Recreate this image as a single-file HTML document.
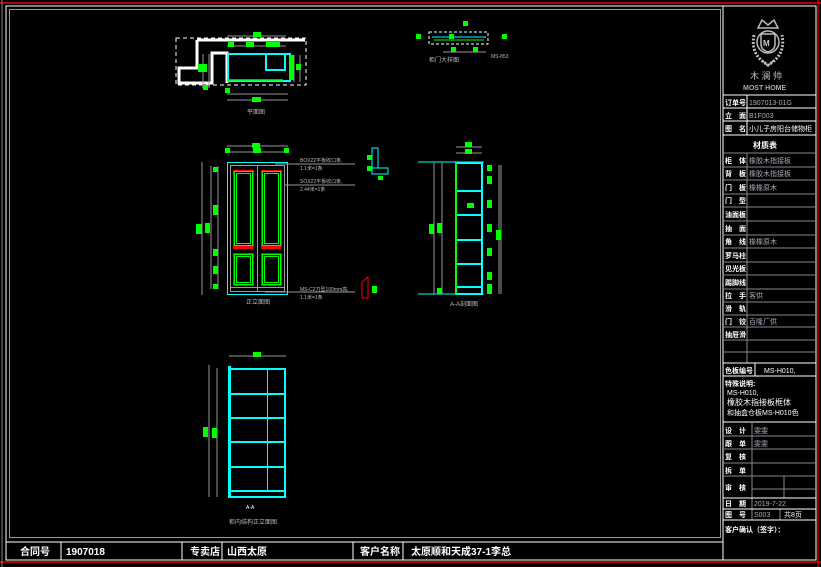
<!DOCTYPE html>
<html><head><meta charset="utf-8"><style>
html,body{margin:0;padding:0;background:#000;}
svg{display:block}
text{font-family:"Liberation Sans","Noto Sans CJK SC",sans-serif;}
</style></head><body>
<svg width="821" height="567" viewBox="0 0 821 567" xmlns="http://www.w3.org/2000/svg">
<rect width="821" height="567" fill="#000"/>
<line x1="0" y1="3" x2="821" y2="3" stroke="#e00" stroke-width="1.5"/>
<line x1="0" y1="562" x2="821" y2="562" stroke="#e00" stroke-width="1.5"/>
<line x1="818" y1="0" x2="818" y2="567" stroke="#e00" stroke-width="1.2"/>
<line x1="2" y1="0" x2="2" y2="567" stroke="#888" stroke-width="1"/>
<rect x="6" y="6" width="810" height="554" fill="none" stroke="#fff" stroke-width="1"/>
<rect x="9.5" y="9.5" width="711" height="528" fill="none" stroke="#999" stroke-width="1"/>
<line x1="723" y1="6" x2="723" y2="560" stroke="#fff"/>
<line x1="6" y1="542" x2="723" y2="542" stroke="#fff"/>
<g stroke="#fff"><line x1="61" y1="542" x2="61" y2="560"/><line x1="182" y1="542" x2="182" y2="560"/><line x1="222" y1="542" x2="222" y2="560"/><line x1="353" y1="542" x2="353" y2="560"/><line x1="403" y1="542" x2="403" y2="560"/></g>
<g fill="#fff" font-size="10" font-weight="bold">
<text x="20" y="555">合同号</text><text x="66" y="555">1907018</text><text x="190" y="555">专卖店</text><text x="227" y="555">山西太原</text><text x="360" y="555">客户名称</text><text x="411" y="555">太原顺和天成37-1李总</text></g>

<g stroke="#bbb" fill="none">
<path d="M754 35 Q750 55 768 65 Q786 55 782 35" stroke-width="3" stroke-dasharray="2 1.5"/>
<circle cx="768" cy="42" r="11" stroke-width="1.5"/>
<path d="M761 34 h14 v10 q0 6 -7 8 q-7 -2 -7 -8 z" stroke-width="1.5"/>
<path d="M758 28 L762 20 L768 25 L774 20 L778 28 Z" stroke-width="1.5"/>
<path d="M762 60 L768 66 L774 60" stroke-width="1.5"/>
</g>
<text x="763" y="46" fill="#ccc" font-size="8" font-weight="bold">M</text>
<text x="750" y="79" fill="#bbb" font-size="9">木 澜 帅</text>
<text x="743" y="90" fill="#aaa" font-size="7" font-weight="bold">MOST HOME</text>
<g stroke="#fff" stroke-width="1">
<line x1="723" y1="95" x2="816" y2="95"/><line x1="723" y1="108" x2="816" y2="108"/><line x1="723" y1="121" x2="816" y2="121"/><line x1="723" y1="135" x2="816" y2="135"/>
<line x1="747" y1="95" x2="747" y2="135"/>
</g>
<g stroke="#888" stroke-width="1">
<line x1="723" y1="153" x2="816" y2="153"/>
<line x1="723" y1="167" x2="816" y2="167"/><line x1="723" y1="180" x2="816" y2="180"/><line x1="723" y1="194" x2="816" y2="194"/><line x1="723" y1="207" x2="816" y2="207"/><line x1="723" y1="221" x2="816" y2="221"/><line x1="723" y1="235" x2="816" y2="235"/><line x1="723" y1="248" x2="816" y2="248"/><line x1="723" y1="262" x2="816" y2="262"/><line x1="723" y1="275" x2="816" y2="275"/><line x1="723" y1="289" x2="816" y2="289"/><line x1="723" y1="302" x2="816" y2="302"/><line x1="723" y1="315" x2="816" y2="315"/><line x1="723" y1="327" x2="816" y2="327"/><line x1="723" y1="340" x2="816" y2="340"/><line x1="723" y1="352" x2="816" y2="352"/>
<line x1="747" y1="153" x2="747" y2="363"/>
</g>
<g stroke="#fff"><line x1="723" y1="363" x2="816" y2="363"/><line x1="723" y1="376" x2="816" y2="376"/><line x1="755" y1="363" x2="755" y2="376"/><line x1="723" y1="422" x2="816" y2="422"/></g>
<g stroke="#888"><line x1="723" y1="436" x2="816" y2="436"/><line x1="723" y1="449" x2="816" y2="449"/><line x1="723" y1="463" x2="816" y2="463"/><line x1="723" y1="476" x2="816" y2="476"/><line x1="752" y1="489" x2="816" y2="489"/><line x1="784" y1="476" x2="784" y2="498"/>
<line x1="752" y1="422" x2="752" y2="520"/><line x1="780" y1="509" x2="780" y2="520"/></g>
<g stroke="#fff"><line x1="723" y1="498" x2="816" y2="498"/><line x1="723" y1="509" x2="816" y2="509"/><line x1="723" y1="520" x2="816" y2="520"/></g>
<g font-size="7" fill="#fff" font-weight="bold">
<text x="725" y="105">订单号</text><text x="725" y="118">立　面</text><text x="725" y="131">图　名</text>
<text x="753" y="148" font-size="8">材质表</text>
<text x="725" y="163">柜　体</text><text x="725" y="176">背　板</text><text x="725" y="190">门　板</text><text x="725" y="203">门　型</text><text x="725" y="217">油面板</text><text x="725" y="231">抽　面</text><text x="725" y="244">角　线</text><text x="725" y="258">罗马柱</text><text x="725" y="271">见光板</text><text x="725" y="285">踢脚线</text><text x="725" y="298">拉　手</text><text x="725" y="311">滑　轨</text><text x="725" y="324">门　铰</text><text x="725" y="337">抽屉滑</text>
<text x="725" y="373">色板编号</text>
<text x="725" y="386">特殊说明:</text>
<text x="725" y="433">设　计</text><text x="725" y="446">跟　单</text><text x="725" y="459">复　核</text><text x="725" y="473">拆　单</text><text x="725" y="490">审　核</text><text x="725" y="506">日　期</text><text x="725" y="517">图　号</text>
<text x="725" y="532">客户确认（签字）：</text>
</g>
<g font-size="7" fill="#aab">
<text x="749" y="105">1907013-01G</text><text x="749" y="118">B1F003</text><text x="749" y="131" fill="#fff">小儿子房阳台储物柜</text>
<text x="749" y="163">橡胶木指接板</text><text x="749" y="176">橡胶木指接板</text><text x="749" y="190">橡橡原木</text><text x="749" y="244">橡橡原木</text><text x="749" y="298">客供</text><text x="749" y="324">百隆厂供</text>
<text x="754" y="433">雯雯</text><text x="754" y="446">雯雯</text><text x="754" y="506">2019-7-22</text><text x="754" y="517">S003</text><text x="784" y="517" fill="#fff">共8页</text>
</g>
<text x="764" y="373" font-size="7" fill="#fff">MS-H010,</text>
<text x="727" y="395" font-size="7" fill="#fff">MS-H010,</text>
<text x="727" y="405" font-size="8" fill="#fff">橡胶木指接板框体</text>
<text x="727" y="415" font-size="7" fill="#fff">和抽盒仓板MS-H010色</text>

<g fill="none">
<rect x="176" y="38" width="130" height="47" stroke="#fff" stroke-dasharray="4 3"/>
<path d="M197 40 H305 M197 40 V68 H179 V83 H212 V53 H227 V83" stroke="#fff" stroke-width="3"/>
<rect x="228" y="54" width="62" height="27" stroke="#0ff" stroke-width="2"/>
<rect x="266" y="54" width="19" height="16" stroke="#0ff" stroke-width="2"/>
<line x1="228" y1="80" x2="283" y2="80" stroke="#0f0" stroke-width="1.5"/>
<g stroke="#999"><line x1="227" y1="36" x2="286" y2="36"/><line x1="227" y1="46" x2="286" y2="46"/><line x1="227" y1="94" x2="288" y2="94"/><line x1="227" y1="100" x2="288" y2="100"/><line x1="203" y1="54" x2="203" y2="88"/><line x1="209" y1="54" x2="209" y2="88"/><line x1="294" y1="55" x2="294" y2="82"/><line x1="300" y1="55" x2="300" y2="82"/></g>
</g>
<g fill="#0f0"><rect x="253" y="32" width="8" height="5"/><rect x="228" y="42" width="6" height="5"/><rect x="246" y="42" width="8" height="5"/><rect x="266" y="42" width="6" height="5"/><rect x="272" y="42" width="8" height="5"/><rect x="198" y="64" width="9" height="8"/><rect x="289" y="55" width="5" height="25"/><rect x="296" y="64" width="5" height="6"/><rect x="203" y="85" width="5" height="5"/><rect x="225" y="88" width="5" height="5"/><rect x="252" y="97" width="9" height="5"/></g>
<text x="247" y="114" font-size="6" fill="#bbb">平面图</text>

<g fill="none"><rect x="429" y="32" width="59" height="12" stroke="#fff" stroke-dasharray="3 2"/>
<path d="M432 37 H486" stroke="#0ff"/><path d="M434 40 H484" stroke="#0f0"/></g>
<g fill="#0f0"><rect x="463" y="21" width="5" height="5"/><rect x="416" y="34" width="5" height="5"/><rect x="449" y="34" width="5" height="5"/><rect x="502" y="34" width="5" height="5"/><rect x="451" y="47" width="5" height="5"/><rect x="473" y="47" width="5" height="5"/></g>
<line x1="443" y1="52" x2="486" y2="52" stroke="#999"/>
<text x="491" y="58" font-size="5" fill="#bbb">MS-853</text>
<text x="429" y="62" font-size="6" fill="#bbb">柜门大样图</text>

<g fill="none">
<rect x="227.5" y="162.5" width="60" height="132" stroke="#0ff" stroke-width="1"/>
<rect x="230.5" y="165.5" width="54" height="126" stroke="#999"/>
<line x1="257.5" y1="166" x2="257.5" y2="291" stroke="#999"/>
<line x1="230" y1="287.5" x2="285" y2="287.5" stroke="#999"/>
<rect x="233.5" y="170.5" width="20" height="76" stroke="#f00"/><rect x="234.5" y="171.5" width="18" height="74" stroke="#0f0"/><rect x="236.5" y="173.5" width="14" height="70" stroke="#0f0"/>
<rect x="261.5" y="170.5" width="20" height="76" stroke="#f00"/><rect x="262.5" y="171.5" width="18" height="74" stroke="#0f0"/><rect x="264.5" y="173.5" width="14" height="70" stroke="#0f0"/>
<rect x="233.5" y="253.5" width="20" height="32" stroke="#f00"/><rect x="234.5" y="254.5" width="18" height="30" stroke="#0f0"/><rect x="236.5" y="256.5" width="14" height="26" stroke="#0f0"/>
<rect x="261.5" y="253.5" width="20" height="32" stroke="#f00"/><rect x="262.5" y="254.5" width="18" height="30" stroke="#0f0"/><rect x="264.5" y="256.5" width="14" height="26" stroke="#0f0"/>
<g stroke="#999"><line x1="227" y1="146" x2="288" y2="146"/><line x1="227" y1="152" x2="288" y2="152"/><line x1="202" y1="162" x2="202" y2="295"/><line x1="211" y1="166" x2="211" y2="289"/><line x1="218" y1="166" x2="218" y2="289"/>
<line x1="275" y1="164" x2="355" y2="164"/><line x1="285" y1="185" x2="355" y2="185"/><line x1="265" y1="292" x2="355" y2="292"/></g>
</g>
<rect x="233" y="247" width="20" height="2" fill="#f00"/><rect x="261" y="247" width="20" height="2" fill="#f00"/>
<g fill="#0f0"><rect x="252" y="143" width="8" height="5"/><rect x="225" y="148" width="5" height="5"/><rect x="253" y="148" width="8" height="5"/><rect x="284" y="148" width="5" height="5"/><rect x="196" y="224" width="6" height="10"/><rect x="205" y="223" width="5" height="10"/><rect x="213" y="167" width="5" height="5"/><rect x="213" y="205" width="5" height="10"/><rect x="213" y="249" width="5" height="7"/><rect x="213" y="266" width="5" height="8"/><rect x="213" y="284" width="5" height="5"/></g>
<g font-size="5" fill="#bbb"><text x="300" y="162">BOX22平板收口条,</text><text x="300" y="170">1.1米=1条</text><text x="300" y="183">SOX22平板收口条,</text><text x="300" y="191">2.44米=1条</text><text x="300" y="291">MS-C2刀型100mm高,</text><text x="300" y="299">1.1米=1条</text></g>
<text x="246" y="304" font-size="6" fill="#bbb">正立面图</text>
<path d="M372 148 h6 v20 h-6 z M372 168 h16 v6 h-16 z" fill="none" stroke="#0ff"/>
<rect x="367" y="155" width="5" height="5" fill="#0f0"/><rect x="367" y="166" width="5" height="5" fill="#0f0"/><rect x="378" y="176" width="5" height="4" fill="#0f0"/>
<path d="M362 298 V282 L368 277 V298 Z" fill="none" stroke="#f00"/><rect x="372" y="286" width="5" height="7" fill="#0f0"/>

<g fill="none">
<line x1="418" y1="162" x2="484" y2="162" stroke="#0ff"/><line x1="418" y1="294" x2="484" y2="294" stroke="#0ff"/>
<rect x="456" y="163" width="26" height="131" stroke="#0ff" stroke-width="2"/>
<line x1="456" y1="163" x2="456" y2="294" stroke="#0f0" stroke-width="2"/>
<g stroke="#0ff" stroke-width="2"><line x1="457" y1="191" x2="482" y2="191"/><line x1="457" y1="215" x2="482" y2="215"/><line x1="457" y1="240" x2="482" y2="240"/><line x1="457" y1="264" x2="482" y2="264"/><line x1="457" y1="287" x2="482" y2="287"/></g>
<g stroke="#999"><line x1="434" y1="162" x2="434" y2="294"/><line x1="442" y1="162" x2="442" y2="294"/><line x1="499" y1="165" x2="499" y2="294"/><line x1="501" y1="165" x2="501" y2="294"/><line x1="456" y1="147" x2="482" y2="147"/><line x1="456" y1="153" x2="482" y2="153"/></g>
</g>
<g fill="#0f0"><rect x="465" y="142" width="7" height="5"/><rect x="465" y="149" width="7" height="5"/><rect x="429" y="224" width="5" height="10"/><rect x="437" y="223" width="5" height="10"/><rect x="437" y="288" width="5" height="6"/><rect x="496" y="230" width="5" height="10"/><rect x="467" y="203" width="7" height="5"/>
<rect x="487" y="165" width="5" height="6"/><rect x="487" y="176" width="5" height="8"/><rect x="487" y="200" width="5" height="8"/><rect x="487" y="224" width="5" height="8"/><rect x="487" y="248" width="5" height="8"/><rect x="487" y="272" width="5" height="8"/><rect x="487" y="284" width="5" height="10"/></g>
<text x="450" y="306" font-size="6" fill="#bbb">A-A剖面图</text>

<g fill="none">
<rect x="229" y="369" width="56" height="128" stroke="#0ff" stroke-width="2"/>
<rect x="228" y="366" width="3" height="131" fill="#0ff"/>
<g stroke="#0ff" stroke-width="2"><line x1="230" y1="394" x2="285" y2="394"/><line x1="230" y1="418" x2="285" y2="418"/><line x1="230" y1="442" x2="285" y2="442"/><line x1="230" y1="467" x2="285" y2="467"/><line x1="230" y1="491" x2="285" y2="491"/></g>
<line x1="267.5" y1="370" x2="267.5" y2="490" stroke="#0ff"/>
<g stroke="#999"><line x1="229" y1="356" x2="286" y2="356"/><line x1="209" y1="365" x2="209" y2="497"/><line x1="217" y1="368" x2="217" y2="497"/></g>
</g>
<g fill="#0f0"><rect x="253" y="352" width="8" height="5"/><rect x="203" y="427" width="5" height="10"/><rect x="212" y="428" width="5" height="10"/></g>
<text x="246" y="509" font-size="5" fill="#fff">A-A</text>
<text x="229" y="524" font-size="6" fill="#bbb">柜内结构正立面图</text>
</svg>
</body></html>
